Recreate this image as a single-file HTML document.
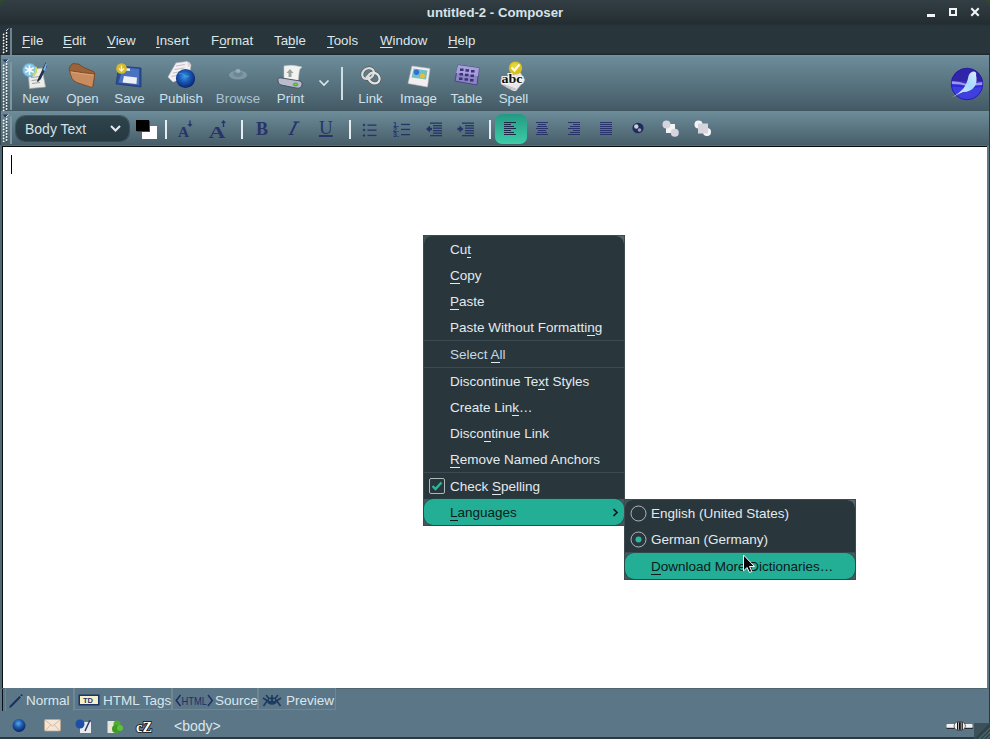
<!DOCTYPE html>
<html><head><meta charset="utf-8">
<style>
*{margin:0;padding:0;box-sizing:border-box}
html,body{width:990px;height:739px;overflow:hidden;background:#27343b}
body{position:relative;font-family:"Liberation Sans",sans-serif;font-size:13px;color:#dfe6ea}
.a{position:absolute}
#title{left:0;top:0;width:990px;height:24px;background:linear-gradient(#333e44,#2a353a 60%,#222c31)}
#title .t{left:0;width:990px;top:5px;text-align:center;font-weight:bold;font-size:13.2px;color:#d9e2e6;letter-spacing:0}
#menubar{left:0;top:24px;width:990px;height:31px;background:linear-gradient(#232d32,#28353b 2px,#28353b 29px,#1f2a30 30px)}
.mi{top:9px;font-size:13.3px;color:#dde5e9;white-space:pre}
.mi u{text-decoration:underline;text-underline-offset:2px;text-decoration-thickness:1px}
#tb1{left:0;top:55px;width:990px;height:56px;background:linear-gradient(#7893a0,#6c8b99 2px,#445b66 55px,#3d535d)}
#tb2{left:0;top:111px;width:990px;height:34px;background:linear-gradient(#6f8d9a,#6b8a97 2px,#475e69)}
#line{left:0;top:145px;width:990px;height:1px;background:#566a72}
#edit{left:2px;top:146px;width:985px;height:542px;background:#fff;border-left:1px solid #0b0e10;border-top:1px solid #0b0e10}
#tabs{left:0;top:688px;width:990px;height:23px;background:#5a7687;border-top:1px solid #4f6570}
#status{left:0;top:711px;width:990px;height:28px;background:#5a7687;border-bottom:2px solid #2c3a40}
.tab{top:-1px;height:22px;border:1px solid #6f8793;border-top:none;background:#5a7687}
.tt{top:4px;font-size:13.5px;color:#dbe7ec;white-space:pre}
#menu{left:423px;top:235px;width:202px;height:291px;background:linear-gradient(#29363c,#29363c) padding-box,#3d4b51;border:1px solid #3d4b51;box-shadow:inset 0 0 0 0 #000}
#menu::before,#sub::before{content:'';position:absolute;left:0;top:0;width:7px;height:7px;background:radial-gradient(circle at 100% 100%,#29363c 6px,#3c5550 7px)}
#menu::after,#sub::after{content:'';position:absolute;right:0;top:0;width:7px;height:7px;background:radial-gradient(circle at 0 100%,#29363c 6px,#56666c 7px)}
.it{left:26px;font-size:13.5px;color:#e3eaee;white-space:pre}
.it u{text-decoration:none;border-bottom:1px solid #e3eaee;}
.ms{left:0;width:200px;height:1px;background:#3c4b53}
#sub{left:624px;top:499px;width:232px;height:81px;background:#29363c;border:1px solid #3d4b51}
.lbl{font-size:13.3px;color:#cfe0ea;white-space:pre;text-align:center}
.grip{width:6px;background-image:radial-gradient(circle,#fff 0.8px,transparent 1.1px);background-size:3px 3px}
.sep{width:2px;background:#c8d6dc}
</style></head><body>
<div id="title" class="a"><div class="a t">untitled-2 - Composer</div>
  <div class="a" style="left:927px;top:14px;width:8px;height:2.5px;background:#f2f4f5"></div>
  <div class="a" style="left:948.5px;top:7.8px;width:8.6px;height:8.6px;border:2px solid #f2f4f5"></div>
  <svg class="a" style="left:970px;top:7px" width="10" height="10" viewBox="0 0 10 10"><path d="M1.3 1.3 L8.7 8.7 M8.7 1.3 L1.3 8.7" stroke="#f2f4f5" stroke-width="2.1"/></svg>
  <div class="a" style="left:984px;top:0;width:6px;height:6px;background:radial-gradient(circle at 0 100%,transparent 5.5px,#2e4a28 6px)"></div>
  <div class="a" style="left:0;top:0;width:6px;height:6px;background:radial-gradient(circle at 100% 100%,transparent 5.5px,#2e4a28 6px)"></div>
</div>
<div id="menubar" class="a">
  <svg class="a" style="left:0px;top:4px" width="10" height="26" viewBox="0 0 10 26"><path d="M2.5 0.5 L8.5 0.5 L5.5 3.5 Z" fill="#26365e"/><path d="M6 3 L8.5 0.5" stroke="#fff" stroke-width="0.8"/><circle cx="3.6" cy="6.5" r="0.9" fill="#fff"/><circle cx="6.6" cy="5" r="0.9" fill="#fff"/><rect x="3.5" y="7.3" width="1.3" height="0.9" fill="#000" opacity="0.6"/><rect x="6.5" y="5.8" width="1.3" height="0.9" fill="#000" opacity="0.6"/><circle cx="3.6" cy="9.5" r="0.9" fill="#fff"/><circle cx="6.6" cy="8" r="0.9" fill="#fff"/><rect x="3.5" y="10.3" width="1.3" height="0.9" fill="#000" opacity="0.6"/><rect x="6.5" y="8.8" width="1.3" height="0.9" fill="#000" opacity="0.6"/><circle cx="3.6" cy="12.5" r="0.9" fill="#fff"/><circle cx="6.6" cy="11" r="0.9" fill="#fff"/><rect x="3.5" y="13.3" width="1.3" height="0.9" fill="#000" opacity="0.6"/><rect x="6.5" y="11.8" width="1.3" height="0.9" fill="#000" opacity="0.6"/><circle cx="3.6" cy="15.5" r="0.9" fill="#fff"/><circle cx="6.6" cy="14" r="0.9" fill="#fff"/><rect x="3.5" y="16.3" width="1.3" height="0.9" fill="#000" opacity="0.6"/><rect x="6.5" y="14.8" width="1.3" height="0.9" fill="#000" opacity="0.6"/><circle cx="3.6" cy="18.5" r="0.9" fill="#fff"/><circle cx="6.6" cy="17" r="0.9" fill="#fff"/><rect x="3.5" y="19.3" width="1.3" height="0.9" fill="#000" opacity="0.6"/><rect x="6.5" y="17.8" width="1.3" height="0.9" fill="#000" opacity="0.6"/><circle cx="3.6" cy="21.5" r="0.9" fill="#fff"/><circle cx="6.6" cy="20" r="0.9" fill="#fff"/><rect x="3.5" y="22.3" width="1.3" height="0.9" fill="#000" opacity="0.6"/><rect x="6.5" y="20.8" width="1.3" height="0.9" fill="#000" opacity="0.6"/><circle cx="3.6" cy="24.5" r="0.9" fill="#fff"/><circle cx="6.6" cy="23" r="0.9" fill="#fff"/><rect x="3.5" y="25.3" width="1.3" height="0.9" fill="#000" opacity="0.6"/><rect x="6.5" y="23.8" width="1.3" height="0.9" fill="#000" opacity="0.6"/></svg><div class="a" style="left:10px;top:4px;width:1.5px;height:27px;background:#6f838c"></div>
  <div class="a mi" style="left:22px"><u>F</u>ile</div>
  <div class="a mi" style="left:63px"><u>E</u>dit</div>
  <div class="a mi" style="left:107px"><u>V</u>iew</div>
  <div class="a mi" style="left:156px"><u>I</u>nsert</div>
  <div class="a mi" style="left:211px">F<u>o</u>rmat</div>
  <div class="a mi" style="left:274px">Ta<u>b</u>le</div>
  <div class="a mi" style="left:327px"><u>T</u>ools</div>
  <div class="a mi" style="left:380px"><u>W</u>indow</div>
  <div class="a mi" style="left:448px"><u>H</u>elp</div>
</div>
<div id="tb1" class="a">
  <svg class="a" style="left:0px;top:4px" width="10" height="52" viewBox="0 0 10 52"><path d="M2.5 0.5 L8.5 0.5 L5.5 3.5 Z" fill="#26365e"/><path d="M6 3 L8.5 0.5" stroke="#fff" stroke-width="0.8"/><circle cx="3.6" cy="6.5" r="0.9" fill="#fff"/><circle cx="6.6" cy="5" r="0.9" fill="#fff"/><rect x="3.5" y="7.3" width="1.3" height="0.9" fill="#1e2a30" opacity="0.6"/><rect x="6.5" y="5.8" width="1.3" height="0.9" fill="#1e2a30" opacity="0.6"/><circle cx="3.6" cy="9.5" r="0.9" fill="#fff"/><circle cx="6.6" cy="8" r="0.9" fill="#fff"/><rect x="3.5" y="10.3" width="1.3" height="0.9" fill="#1e2a30" opacity="0.6"/><rect x="6.5" y="8.8" width="1.3" height="0.9" fill="#1e2a30" opacity="0.6"/><circle cx="3.6" cy="12.5" r="0.9" fill="#fff"/><circle cx="6.6" cy="11" r="0.9" fill="#fff"/><rect x="3.5" y="13.3" width="1.3" height="0.9" fill="#1e2a30" opacity="0.6"/><rect x="6.5" y="11.8" width="1.3" height="0.9" fill="#1e2a30" opacity="0.6"/><circle cx="3.6" cy="15.5" r="0.9" fill="#fff"/><circle cx="6.6" cy="14" r="0.9" fill="#fff"/><rect x="3.5" y="16.3" width="1.3" height="0.9" fill="#1e2a30" opacity="0.6"/><rect x="6.5" y="14.8" width="1.3" height="0.9" fill="#1e2a30" opacity="0.6"/><circle cx="3.6" cy="18.5" r="0.9" fill="#fff"/><circle cx="6.6" cy="17" r="0.9" fill="#fff"/><rect x="3.5" y="19.3" width="1.3" height="0.9" fill="#1e2a30" opacity="0.6"/><rect x="6.5" y="17.8" width="1.3" height="0.9" fill="#1e2a30" opacity="0.6"/><circle cx="3.6" cy="21.5" r="0.9" fill="#fff"/><circle cx="6.6" cy="20" r="0.9" fill="#fff"/><rect x="3.5" y="22.3" width="1.3" height="0.9" fill="#1e2a30" opacity="0.6"/><rect x="6.5" y="20.8" width="1.3" height="0.9" fill="#1e2a30" opacity="0.6"/><circle cx="3.6" cy="24.5" r="0.9" fill="#fff"/><circle cx="6.6" cy="23" r="0.9" fill="#fff"/><rect x="3.5" y="25.3" width="1.3" height="0.9" fill="#1e2a30" opacity="0.6"/><rect x="6.5" y="23.8" width="1.3" height="0.9" fill="#1e2a30" opacity="0.6"/><circle cx="3.6" cy="27.5" r="0.9" fill="#fff"/><circle cx="6.6" cy="26" r="0.9" fill="#fff"/><rect x="3.5" y="28.3" width="1.3" height="0.9" fill="#1e2a30" opacity="0.6"/><rect x="6.5" y="26.8" width="1.3" height="0.9" fill="#1e2a30" opacity="0.6"/><circle cx="3.6" cy="30.5" r="0.9" fill="#fff"/><circle cx="6.6" cy="29" r="0.9" fill="#fff"/><rect x="3.5" y="31.3" width="1.3" height="0.9" fill="#1e2a30" opacity="0.6"/><rect x="6.5" y="29.8" width="1.3" height="0.9" fill="#1e2a30" opacity="0.6"/><circle cx="3.6" cy="33.5" r="0.9" fill="#fff"/><circle cx="6.6" cy="32" r="0.9" fill="#fff"/><rect x="3.5" y="34.3" width="1.3" height="0.9" fill="#1e2a30" opacity="0.6"/><rect x="6.5" y="32.8" width="1.3" height="0.9" fill="#1e2a30" opacity="0.6"/><circle cx="3.6" cy="36.5" r="0.9" fill="#fff"/><circle cx="6.6" cy="35" r="0.9" fill="#fff"/><rect x="3.5" y="37.3" width="1.3" height="0.9" fill="#1e2a30" opacity="0.6"/><rect x="6.5" y="35.8" width="1.3" height="0.9" fill="#1e2a30" opacity="0.6"/><circle cx="3.6" cy="39.5" r="0.9" fill="#fff"/><circle cx="6.6" cy="38" r="0.9" fill="#fff"/><rect x="3.5" y="40.3" width="1.3" height="0.9" fill="#1e2a30" opacity="0.6"/><rect x="6.5" y="38.8" width="1.3" height="0.9" fill="#1e2a30" opacity="0.6"/><circle cx="3.6" cy="42.5" r="0.9" fill="#fff"/><circle cx="6.6" cy="41" r="0.9" fill="#fff"/><rect x="3.5" y="43.3" width="1.3" height="0.9" fill="#1e2a30" opacity="0.6"/><rect x="6.5" y="41.8" width="1.3" height="0.9" fill="#1e2a30" opacity="0.6"/><circle cx="3.6" cy="45.5" r="0.9" fill="#fff"/><circle cx="6.6" cy="44" r="0.9" fill="#fff"/><rect x="3.5" y="46.3" width="1.3" height="0.9" fill="#1e2a30" opacity="0.6"/><rect x="6.5" y="44.8" width="1.3" height="0.9" fill="#1e2a30" opacity="0.6"/><circle cx="3.6" cy="48.5" r="0.9" fill="#fff"/><circle cx="6.6" cy="47" r="0.9" fill="#fff"/><rect x="3.5" y="49.3" width="1.3" height="0.9" fill="#1e2a30" opacity="0.6"/><rect x="6.5" y="47.8" width="1.3" height="0.9" fill="#1e2a30" opacity="0.6"/><circle cx="3.6" cy="51.5" r="0.9" fill="#fff"/><circle cx="6.6" cy="50" r="0.9" fill="#fff"/><rect x="3.5" y="52.3" width="1.3" height="0.9" fill="#1e2a30" opacity="0.6"/><rect x="6.5" y="50.8" width="1.3" height="0.9" fill="#1e2a30" opacity="0.6"/></svg>
  <div class="a" style="left:10px;top:7px;width:1.5px;height:48px;background:#7d97a2"></div><div class="a" style="left:0;top:0;width:1px;height:56px;background:#34464e"></div>
  <!-- New -->
  <svg class="a" style="left:21px;top:7px" width="26" height="27" viewBox="0 0 26 27">
    <path d="M7 8 L21 6 L24.5 25 L8.5 26.5 Z" fill="#ecede8" stroke="#a9ada8" stroke-width="0.7"/>
    <path d="M10 15.5l9-1M10.5 18.5l9-1M11 21.5l8-1" stroke="#a0a5a0" stroke-width="1"/>
    <path d="M24.8 1.5 L18.5 15 L16.5 19.5 L19.5 16.5 L25.8 3 Z" fill="#263046" stroke="#263046" stroke-width="1.2"/>
    <path d="M25 1 L22 8 L24 9 L26 2 Z" fill="#79b8f0"/>
    <circle cx="8.5" cy="8" r="6.8" fill="#88c4e4" stroke="#5fa2cc" stroke-width="0.8"/>
    <path d="M14.5 5 A6.8 6.8 0 0 1 12 13.5" stroke="#c9dc5a" stroke-width="2.2" fill="none"/>
    <path d="M8.5 3.2v9.6M4.3 5.6l8.4 4.8M4.3 10.4l8.4-4.8" stroke="#fff" stroke-width="1.6"/>
  </svg>
  <!-- Open -->
  <svg class="a" style="left:68px;top:7px" width="28" height="27" viewBox="0 0 28 27">
    <path d="M1 7.5 Q1.5 3 5 1.5 L11 2.2 L15.3 5.3 L25.5 9.5 Q27 10.5 26.5 12 L25 24 L9 20.5 Z" fill="#9c6238" stroke="#6e4122" stroke-width="0.8"/>
    <path d="M1.5 8.7 Q8 9.5 14.5 10.6 L26.3 11.9 Q27 12.5 26.5 14 L24.8 24.5 Q24 25.5 22.5 25 L9.4 20.8 Q6 19.5 4 16.5 Q2.5 13 1.5 8.7 Z" fill="#c88c5e" stroke="#7a4a28" stroke-width="0.9"/>
    <path d="M3 10 Q9 11 15 12 L25 13" stroke="#dba27a" stroke-width="1" fill="none"/>
  </svg>
  <!-- Save -->
  <svg class="a" style="left:115px;top:8px" width="28" height="25" viewBox="0 0 28 25">
    <path d="M4 3 L26 5 L26 24 L1 21 Z" fill="#2c4f96" stroke="#1f3b78" stroke-width="0.8"/>
    <path d="M8 4.5 L24 6 L24 22 L3.5 19.5 Z" fill="#4a73bf"/>
    <path d="M9 13 L22 14.5 L21.5 21 L7.5 19.5 Z" fill="#eef0f5"/>
    <path d="M9 5 L15 5.5 L15 8 L9 7.5 Z" fill="#e6ebf4"/>
    <circle cx="6.5" cy="5.5" r="5.3" fill="#d8b92c"/>
    <path d="M6.5 2.5v5M4 5.5l2.5 2.5 2.5-2.5" stroke="#fff6c6" stroke-width="1.4" fill="none"/>
  </svg>
  <!-- Publish -->
  <svg class="a" style="left:167px;top:5px" width="28" height="30" viewBox="0 0 28 30">
    <defs><radialGradient id="pg" cx="0.45" cy="0.4" r="0.6"><stop offset="0" stop-color="#3d9ae6"/><stop offset="0.45" stop-color="#1b5cb8"/><stop offset="1" stop-color="#0a2470"/></radialGradient></defs>
    <path d="M9 3 L20 1.5 Q23 2 24 5 L22 16 L6 22 L1 17 Z" fill="#f2f0f2" stroke="#c4c2c6" stroke-width="0.6"/>
    <path d="M9 6l9-1.5M7.5 9.5l10-1.5M6 13l9-1.5M4.5 16.5l8-1.5" stroke="#b7aeb8" stroke-width="0.8"/>
    <path d="M20 2 Q23 3 23.5 6 L21 7 Z" fill="#e8d0d8"/>
    <circle cx="18.5" cy="18.5" r="9.6" fill="url(#pg)"/>
    <path d="M12 14 Q15 12 17 15 Q19 18 22 16" stroke="#4fb0f0" stroke-width="1" fill="none" opacity="0.6"/>
  </svg>
  <!-- Browse (disabled) -->
  <svg class="a" style="left:227px;top:12px" width="22" height="14" viewBox="0 0 22 14">
    <ellipse cx="11" cy="8" rx="9" ry="4.5" fill="#8aa3ae" opacity="0.75"/>
    <ellipse cx="11" cy="7" rx="5" ry="3" fill="#6d8794"/>
    <ellipse cx="11" cy="4" rx="2.5" ry="2" fill="#98afb9"/>
  </svg>
  <!-- Print -->
  <svg class="a" style="left:276px;top:9px" width="29" height="25" viewBox="0 0 29 25">
    <path d="M8 2 Q16 0 26 3 Q23 5 23 9 L22 18 L8 16 Z" fill="#f2f2ee" stroke="#c6c8c4" stroke-width="0.6"/>
    <path d="M14 5 L17.5 9 L15.5 9 L15.5 13 L12.5 13 L12.5 9 L10.5 9 Z" fill="#9ca29f"/>
    <path d="M2 17 Q1 13 6 14 L24 17 Q27 18 26 21 Q25 25 20 24 L5 21 Q2 20 2 17 Z" fill="#b8bccb" stroke="#3f4658" stroke-width="0.9"/>
    <ellipse cx="19.5" cy="20.5" rx="2.3" ry="1.5" fill="#6ed040" stroke="#2e6a1a" stroke-width="0.5"/>
  </svg>
  <svg class="a" style="left:318px;top:24px" width="12" height="8" viewBox="0 0 12 8"><path d="M1.5 1.5 L6 6 L10.5 1.5" stroke="#d9e6ec" stroke-width="1.7" fill="none"/></svg>
  <div class="a" style="left:341px;top:12px;width:1.5px;height:33px;background:#d0dde2"></div>
  <!-- Link -->
  <svg class="a" style="left:359px;top:10px" width="24" height="22" viewBox="0 0 24 22">
    <ellipse cx="9" cy="8.5" rx="6.2" ry="5" transform="rotate(-35 9 8.5)" fill="none" stroke="#555b5c" stroke-width="3.6"/>
    <ellipse cx="15" cy="13" rx="6" ry="5" transform="rotate(40 15 13)" fill="none" stroke="#555b5c" stroke-width="3.6"/>
    <ellipse cx="9" cy="8.5" rx="6.2" ry="5" transform="rotate(-35 9 8.5)" fill="none" stroke="#dadcda" stroke-width="2.3"/>
    <ellipse cx="15" cy="13" rx="6" ry="5" transform="rotate(40 15 13)" fill="none" stroke="#e2e4e2" stroke-width="2.3"/>
    <path d="M7 13 Q10 9 13 8" stroke="#dadcda" stroke-width="2.3" fill="none"/>
  </svg>
  <!-- Image -->
  <svg class="a" style="left:407px;top:10px" width="24" height="23" viewBox="0 0 24 23">
    <path d="M5 1 L23 3.5 L20.5 22 L1 18.5 Z" fill="#f3eef2" stroke="#b9b6ba" stroke-width="0.6"/>
    <path d="M6.5 3.5 L20.5 5.5 L19 14.5 L4.5 12.5 Z" fill="#72c0c4"/>
    <circle cx="9.5" cy="7.3" r="2.7" fill="#2f6fd8"/>
    <circle cx="15.5" cy="11" r="2.5" fill="#e6c034"/>
  </svg>
  <!-- Table -->
  <svg class="a" style="left:454px;top:9px" width="26" height="22" viewBox="0 0 26 22">
    <path d="M4 1 L25 4 L23 21 L1 17 Z" fill="#8c83c6" stroke="#3f3a7a" stroke-width="0.8"/>
    <path d="M4 1 L25 4 L24 12 L2 9 Z" fill="#a79fdc"/>
    <g fill="#3a3370">
      <rect x="6" y="4.5" width="3.5" height="2.5"/><rect x="11.5" y="5.2" width="3.5" height="2.5"/><rect x="17" y="6" width="3.5" height="2.5"/>
      <rect x="5.5" y="9" width="3.5" height="2.5"/><rect x="11" y="9.7" width="3.5" height="2.5"/><rect x="16.5" y="10.5" width="3.5" height="2.5"/>
      <rect x="5" y="13.5" width="3.5" height="2.5"/><rect x="10.5" y="14.2" width="3.5" height="2.5"/><rect x="16" y="15" width="3.5" height="2.5"/>
    </g>
  </svg>
  <!-- Spell -->
  <svg class="a" style="left:498px;top:4px" width="30" height="32" viewBox="0 0 30 32">
    <path d="M5 19 L22 13 L27 21 L17 33 L3 25 Z" fill="#e9e7ea" stroke="#a7aaa8" stroke-width="0.6"/>
    <path d="M6 26 L18 30 M8 28 L17 31" stroke="#b5b3b8" stroke-width="0.8"/>
    <circle cx="17.5" cy="9" r="6.6" fill="#d9c21a"/>
    <circle cx="16.5" cy="7.5" r="3.5" fill="#f0e050" opacity="0.6"/>
    <path d="M13.5 8.5 L16.5 11.5 L21.5 5.5" stroke="#fffbe6" stroke-width="2.2" fill="none"/>
    <text x="3.5" y="24" font-family="Liberation Serif" font-weight="bold" font-size="12.5" fill="#111" stroke="#f4f4f4" stroke-width="2.2" paint-order="stroke" textLength="21" lengthAdjust="spacingAndGlyphs">abc</text>
  </svg>
  <div class="a lbl" style="left:15px;top:36px;width:41px">New</div>
  <div class="a lbl" style="left:62px;top:36px;width:41px">Open</div>
  <div class="a lbl" style="left:109px;top:36px;width:41px">Save</div>
  <div class="a lbl" style="left:155px;top:36px;width:52px">Publish</div>
  <div class="a lbl" style="left:212px;top:36px;width:52px;color:#a9c4d2">Browse</div>
  <div class="a lbl" style="left:270px;top:36px;width:41px">Print</div>
  <div class="a lbl" style="left:350px;top:36px;width:41px">Link</div>
  <div class="a lbl" style="left:393px;top:36px;width:51px">Image</div>
  <div class="a lbl" style="left:441px;top:36px;width:51px">Table</div>
  <div class="a lbl" style="left:493px;top:36px;width:41px">Spell</div>
  <!-- seamonkey -->
  <svg class="a" style="left:950px;top:12px" width="34" height="34" viewBox="0 0 34 34">
    <defs><clipPath id="cc"><circle cx="17" cy="17" r="15.8"/></clipPath>
    <linearGradient id="bird" x1="0" y1="1" x2="1" y2="0"><stop offset="0" stop-color="#e8f4ff"/><stop offset="0.6" stop-color="#a8d8ff"/><stop offset="1" stop-color="#d8ecff"/></linearGradient></defs>
    <g clip-path="url(#cc)">
      <rect x="0" y="0" width="34" height="34" fill="#3a2fb8"/>
      <rect x="0" y="0" width="34" height="14" fill="#3024a8"/>
      <rect x="0" y="19" width="34" height="15" fill="#3f3fe0"/>
      <path d="M0 14 Q10 14.5 17 17 Q26 16 34 15 L34 19 Q24 20 17 20.5 Q8 18 0 18 Z" fill="#9c97ee"/>
      <path d="M0 17 Q10 17 17 19 L34 18 L34 19.5 Q24 21 17 21 Q8 19.5 0 19.5 Z" fill="#2a2ad8"/>
    </g>
    <circle cx="17" cy="17" r="15.8" fill="none" stroke="#2218a0" stroke-width="0.8"/>
    <path d="M2 30.5 Q9 26.5 13 22 Q17 17 18.5 9 Q20 4.5 24 4.5 Q27 5 26 8 Q27.5 14 25 19 Q21 25 13 25 Q8 27 2 30.5 Z" fill="url(#bird)"/>
  </svg>
</div>
<div id="tb2" class="a">
  <svg class="a" style="left:0px;top:3px" width="10" height="28" viewBox="0 0 10 28"><path d="M2.5 0.5 L8.5 0.5 L5.5 3.5 Z" fill="#26365e"/><path d="M6 3 L8.5 0.5" stroke="#fff" stroke-width="0.8"/><circle cx="3.6" cy="6.5" r="0.9" fill="#fff"/><circle cx="6.6" cy="5" r="0.9" fill="#fff"/><rect x="3.5" y="7.3" width="1.3" height="0.9" fill="#1e2a30" opacity="0.6"/><rect x="6.5" y="5.8" width="1.3" height="0.9" fill="#1e2a30" opacity="0.6"/><circle cx="3.6" cy="9.5" r="0.9" fill="#fff"/><circle cx="6.6" cy="8" r="0.9" fill="#fff"/><rect x="3.5" y="10.3" width="1.3" height="0.9" fill="#1e2a30" opacity="0.6"/><rect x="6.5" y="8.8" width="1.3" height="0.9" fill="#1e2a30" opacity="0.6"/><circle cx="3.6" cy="12.5" r="0.9" fill="#fff"/><circle cx="6.6" cy="11" r="0.9" fill="#fff"/><rect x="3.5" y="13.3" width="1.3" height="0.9" fill="#1e2a30" opacity="0.6"/><rect x="6.5" y="11.8" width="1.3" height="0.9" fill="#1e2a30" opacity="0.6"/><circle cx="3.6" cy="15.5" r="0.9" fill="#fff"/><circle cx="6.6" cy="14" r="0.9" fill="#fff"/><rect x="3.5" y="16.3" width="1.3" height="0.9" fill="#1e2a30" opacity="0.6"/><rect x="6.5" y="14.8" width="1.3" height="0.9" fill="#1e2a30" opacity="0.6"/><circle cx="3.6" cy="18.5" r="0.9" fill="#fff"/><circle cx="6.6" cy="17" r="0.9" fill="#fff"/><rect x="3.5" y="19.3" width="1.3" height="0.9" fill="#1e2a30" opacity="0.6"/><rect x="6.5" y="17.8" width="1.3" height="0.9" fill="#1e2a30" opacity="0.6"/><circle cx="3.6" cy="21.5" r="0.9" fill="#fff"/><circle cx="6.6" cy="20" r="0.9" fill="#fff"/><rect x="3.5" y="22.3" width="1.3" height="0.9" fill="#1e2a30" opacity="0.6"/><rect x="6.5" y="20.8" width="1.3" height="0.9" fill="#1e2a30" opacity="0.6"/><circle cx="3.6" cy="24.5" r="0.9" fill="#fff"/><circle cx="6.6" cy="23" r="0.9" fill="#fff"/><rect x="3.5" y="25.3" width="1.3" height="0.9" fill="#1e2a30" opacity="0.6"/><rect x="6.5" y="23.8" width="1.3" height="0.9" fill="#1e2a30" opacity="0.6"/><circle cx="3.6" cy="27.5" r="0.9" fill="#fff"/><circle cx="6.6" cy="26" r="0.9" fill="#fff"/><rect x="3.5" y="28.3" width="1.3" height="0.9" fill="#1e2a30" opacity="0.6"/><rect x="6.5" y="26.8" width="1.3" height="0.9" fill="#1e2a30" opacity="0.6"/></svg>
  <div class="a" style="left:10px;top:5px;width:1.5px;height:28px;background:#7d97a2"></div><div class="a" style="left:0;top:0;width:1px;height:34px;background:#34464e"></div>
  <div class="a" style="left:16px;top:5px;width:113px;height:25px;border-radius:9px;background:linear-gradient(#2f444e,#263840);box-shadow:0 0 0 1px rgba(30,45,52,0.5)"></div>
  <div class="a" style="left:25px;top:10px;font-size:14px;color:#d6e0e5;white-space:pre">Body Text</div>
  <svg class="a" style="left:109px;top:13px" width="13" height="9" viewBox="0 0 13 9"><path d="M2 2 L6.5 6.5 L11 2" stroke="#e4ecef" stroke-width="2" fill="none"/></svg>
  <div class="a" style="left:142px;top:15px;width:15px;height:13px;background:#fff"></div>
  <div class="a" style="left:136px;top:9px;width:13px;height:11px;background:#000;box-shadow:1px 1px 0 #3a4a52"></div>
  <div class="a" style="left:165px;top:9px;width:1.5px;height:19px;background:#e6eef1"></div>
  <svg class="a" style="left:176px;top:8px" width="20" height="20" viewBox="0 0 20 20">
    <text x="2" y="18" font-family="Liberation Serif" font-weight="bold" font-size="14" fill="#27336a" textLength="11" lengthAdjust="spacingAndGlyphs">A</text>
    <path d="M14 1.5v5" stroke="#27336a" stroke-width="1.4"/><path d="M11.5 5 L14 8 L16.5 5 Z" fill="#27336a"/>
  </svg>
  <svg class="a" style="left:207px;top:8px" width="22" height="20" viewBox="0 0 22 20">
    <text x="1.5" y="19" font-family="Liberation Serif" font-weight="bold" font-size="17" fill="#27336a" textLength="17" lengthAdjust="spacingAndGlyphs">A</text>
    <path d="M16.5 8V3" stroke="#27336a" stroke-width="1.4"/><path d="M14 4 L16.5 1 L19 4 Z" fill="#27336a"/>
  </svg>
  <div class="a" style="left:241px;top:9px;width:1.5px;height:19px;background:#e6eef1"></div>
  <svg class="a" style="left:256px;top:10px" width="13" height="15" viewBox="0 0 13 15"><text x="0" y="14" font-family="Liberation Serif" font-weight="bold" font-size="18.5" fill="#27336a" textLength="12" lengthAdjust="spacingAndGlyphs">B</text></svg>
  <svg class="a" style="left:288px;top:10px" width="12" height="15" viewBox="0 0 12 15"><path d="M8.5 1 L2.5 13.5" stroke="#27336a" stroke-width="1.8"/><path d="M5.5 1.2 H11.5 M0.5 13.5 H5.5" stroke="#27336a" stroke-width="1.2"/></svg>
  <div class="a" style="left:319px;top:6px;font-family:'Liberation Serif';font-size:19px;color:#27336a;text-decoration:underline;text-decoration-thickness:1.5px;text-underline-offset:1px">U</div>
  <div class="a" style="left:349px;top:9px;width:1.5px;height:19px;background:#e6eef1"></div>
  <svg class="a" style="left:362px;top:11.5px" width="17" height="16" viewBox="0 0 17 16">
    <g fill="#27336a"><path d="M2 0.5 L3.5 2 L2 3.5 L0.5 2 Z"/><path d="M2 5.5 L3.5 7 L2 8.5 L0.5 7 Z"/><path d="M2 11 L3.5 12.5 L2 14 L0.5 12.5 Z"/>
    <rect x="5.5" y="1.5" width="9" height="1.3"/><rect x="5.5" y="6.5" width="9" height="1.3"/><rect x="5.5" y="11.8" width="9" height="1.3"/></g>
  </svg>
  <svg class="a" style="left:392px;top:10px" width="19" height="17" viewBox="0 0 19 17">
    <g fill="#27336a"><text x="1" y="5.5" font-size="7" font-family="Liberation Sans" font-weight="bold" textLength="6" lengthAdjust="spacingAndGlyphs">1.</text><text x="1" y="10.5" font-size="7" font-family="Liberation Sans" font-weight="bold" textLength="6" lengthAdjust="spacingAndGlyphs">2.</text><text x="1" y="15.7" font-size="7" font-family="Liberation Sans" font-weight="bold" textLength="6" lengthAdjust="spacingAndGlyphs">3.</text>
    <rect x="9" y="2.8" width="9" height="1.3"/><rect x="9" y="7.8" width="9" height="1.3"/><rect x="9" y="13" width="9" height="1.3"/></g>
  </svg>
  <svg class="a" style="left:425px;top:11px" width="19" height="15" viewBox="0 0 19 15">
    <g fill="#27336a"><rect x="5" y="0.5" width="12" height="1.3"/><rect x="8" y="3" width="9" height="1.3"/><rect x="8" y="5.5" width="9" height="1.3"/><rect x="8" y="8" width="9" height="1.3"/><rect x="8" y="10.5" width="9" height="1.3"/><rect x="5" y="13" width="12" height="1.3"/>
    <path d="M1 7 L5 3.5 L5 5.8 L7 5.8 L7 8.2 L5 8.2 L5 10.5 Z"/></g>
  </svg>
  <svg class="a" style="left:457px;top:11px" width="19" height="15" viewBox="0 0 19 15">
    <g fill="#27336a"><rect x="5" y="0.5" width="12" height="1.3"/><rect x="8" y="3" width="9" height="1.3"/><rect x="8" y="5.5" width="9" height="1.3"/><rect x="8" y="8" width="9" height="1.3"/><rect x="8" y="10.5" width="9" height="1.3"/><rect x="5" y="13" width="12" height="1.3"/>
    <path d="M6.5 7 L2.5 3.5 L2.5 5.8 L0.5 5.8 L0.5 8.2 L2.5 8.2 L2.5 10.5 Z"/></g>
  </svg>
  <div class="a" style="left:489px;top:9px;width:1.5px;height:19px;background:#e6eef1"></div>
  <div class="a" style="left:495px;top:3px;width:32px;height:30px;border-radius:7px;background:linear-gradient(#249a84,#3dcca8)"></div>
  <svg class="a" style="left:504px;top:11px" width="13" height="13" viewBox="0 0 13 13"><g fill="#1c2a4a"><rect x="0" y="0" width="12" height="1"/><rect x="0" y="2" width="7" height="1"/><rect x="0" y="4" width="10" height="1"/><rect x="0" y="6" width="12" height="1"/><rect x="0" y="8" width="7" height="1"/><rect x="0" y="10" width="10" height="1"/><rect x="0" y="12" width="12" height="1"/></g></svg>
  <svg class="a" style="left:536px;top:11px" width="13" height="13" viewBox="0 0 13 13"><g fill="#27336a"><rect x="0" y="0" width="12" height="1"/><rect x="2" y="2" width="8" height="1"/><rect x="1" y="4" width="10" height="1"/><rect x="0" y="6" width="12" height="1"/><rect x="2" y="8" width="8" height="1"/><rect x="1" y="10" width="10" height="1"/><rect x="0" y="12" width="12" height="1"/></g></svg>
  <svg class="a" style="left:568px;top:11px" width="13" height="13" viewBox="0 0 13 13"><g fill="#27336a"><rect x="0" y="0" width="12" height="1"/><rect x="5" y="2" width="7" height="1"/><rect x="2" y="4" width="10" height="1"/><rect x="0" y="6" width="12" height="1"/><rect x="5" y="8" width="7" height="1"/><rect x="2" y="10" width="10" height="1"/><rect x="0" y="12" width="12" height="1"/></g></svg>
  <svg class="a" style="left:600px;top:11px" width="13" height="13" viewBox="0 0 13 13"><g fill="#27336a"><rect x="0" y="0" width="12" height="1"/><rect x="0" y="2" width="12" height="1"/><rect x="0" y="4" width="12" height="1"/><rect x="0" y="6" width="12" height="1"/><rect x="0" y="8" width="12" height="1"/><rect x="0" y="10" width="12" height="1"/><rect x="0" y="12" width="12" height="1"/></g></svg>
  <svg class="a" style="left:632px;top:11px" width="13" height="12" viewBox="0 0 13 12">
    <ellipse cx="6" cy="6" rx="5.6" ry="5.3" fill="#1f2a5e"/><circle cx="4.3" cy="4.5" r="2.2" fill="#c9ced8"/><circle cx="7.5" cy="8" r="1.8" fill="#9aa0a8"/>
  </svg>
  <svg class="a" style="left:662px;top:9px" width="18" height="18" viewBox="0 0 18 18">
    <rect x="4" y="4" width="9" height="9" fill="#f4f4f6"/><circle cx="4.5" cy="4.5" r="4" fill="#d6d4dc"/><circle cx="12.8" cy="12.8" r="4" fill="#d6d4dc"/>
  </svg>
  <svg class="a" style="left:694px;top:9px" width="18" height="17" viewBox="0 0 18 17">
    <circle cx="4.5" cy="4.5" r="4" fill="#f4f4f6"/><circle cx="13" cy="12" r="4" fill="#f4f4f6"/><rect x="4" y="3.5" width="10" height="10" fill="#d6d4dc"/>
  </svg>
</div>
<div id="line" class="a"></div>
<div class="a" style="left:989px;top:55px;width:1px;height:684px;background:#2b3a40;z-index:5"></div>
<div id="edit" class="a"><div class="a" style="left:8px;top:8px;width:1px;height:19px;background:#000"></div></div>
<div class="a" style="left:0;top:146px;width:2px;height:542px;background:#4e6874"></div>
<div class="a" style="left:987px;top:146px;width:3px;height:542px;background:#5f7986"></div>
<div id="tabs" class="a">
  <div class="a" style="left:2px;top:0;width:1px;height:25px;background:#0b0e10"></div>
  <div class="a tab" style="left:5px;width:69px;height:24.5px;background:#5a7687"></div>
  <svg class="a" style="left:8px;top:4px" width="15" height="16" viewBox="0 0 15 16"><path d="M13.5 1 L2 12.5 L1 15 L3.5 14 L14.8 2.5 Z" fill="#1b2f63"/><path d="M12 2.5 L14 4.5" stroke="#9ab4d8" stroke-width="1"/></svg>
  <div class="a tt" style="left:26px">Normal</div>
  <div class="a tab" style="left:74px;width:98px"></div>
  <svg class="a" style="left:78px;top:5px" width="22" height="12" viewBox="0 0 22 12"><rect x="0.5" y="0.5" width="21" height="11" fill="#1d3566"/><rect x="2" y="2" width="18" height="8" fill="#f4f0c8"/><text x="5" y="9" font-family="Liberation Sans" font-weight="bold" font-size="7.5" fill="#1d3566">TD</text></svg>
  <div class="a tt" style="left:103px">HTML Tags</div>
  <div class="a tab" style="left:172px;width:86px"></div>
  <svg class="a" style="left:175px;top:5px" width="39" height="13" viewBox="0 0 39 13"><path d="M5.5 1 L1.2 6.5 L5.5 12M33 1 L37.3 6.5 L33 12" stroke="#1d2f66" stroke-width="1.5" fill="none"/><text x="6.5" y="10.8" font-family="Liberation Sans" font-size="11" fill="#1d2f66" textLength="25.5" lengthAdjust="spacingAndGlyphs">HTML</text></svg>
  <div class="a tt" style="left:215px">Source</div>
  <div class="a tab" style="left:258px;width:78px"></div>
  <svg class="a" style="left:262px;top:5px" width="20" height="13" viewBox="0 0 20 13"><g fill="none" stroke="#1e3a5e" stroke-width="1.6"><path d="M1.5 12 L5 7 L15 7 L18.5 12 M1 4 L5 6.5 M19 4 L15 6.5 M4 1 L7 4.5 M16 1 L13 4.5 M10 1 V4"/></g><ellipse cx="10" cy="7" rx="5" ry="3.8" fill="#1e3a5e"/><circle cx="8" cy="6" r="0.9" fill="#6a8a9a"/><circle cx="12" cy="6" r="0.9" fill="#6a8a9a"/></svg>
  <div class="a tt" style="left:286px">Preview</div>
</div>
<div id="status" class="a">
  <svg class="a" style="left:12px;top:7px" width="15" height="15" viewBox="0 0 15 15"><defs><radialGradient id="gl" cx="0.45" cy="0.35" r="0.6"><stop offset="0" stop-color="#5aa8e8"/><stop offset="0.5" stop-color="#1e5cb0"/><stop offset="1" stop-color="#0c2a6a"/></radialGradient></defs><circle cx="7" cy="7.5" r="6.5" fill="url(#gl)"/></svg>
  <svg class="a" style="left:44px;top:8px" width="17" height="13" viewBox="0 0 17 13"><rect x="0.5" y="0.5" width="16" height="11.5" rx="1" fill="#f3e6d6" stroke="#bfa58c" stroke-width="0.8"/><path d="M1 1 L8.5 7 L16 1 M1 12 L6.5 6 M16 12 L10.5 6" stroke="#c9ae94" stroke-width="0.8" fill="none"/></svg>
  <svg class="a" style="left:75px;top:8px" width="17" height="15" viewBox="0 0 17 15"><rect x="5" y="3" width="11" height="11" fill="#e8eaee"/><circle cx="5" cy="5" r="4.5" fill="#1e4fa8"/><path d="M15 1 L10 12" stroke="#2a3c66" stroke-width="1.5"/></svg>
  <svg class="a" style="left:107px;top:8px" width="16" height="15" viewBox="0 0 16 15"><rect x="0.5" y="2" width="10" height="12" fill="#e8e6dc"/><circle cx="10" cy="5" r="3.5" fill="#4fae2c"/><circle cx="9" cy="10" r="4" fill="#3f9a22"/><circle cx="13" cy="9" r="3" fill="#5cc23a"/></svg>
  <svg class="a" style="left:135px;top:9px" width="18" height="14" viewBox="0 0 18 14"><text x="1" y="12" font-family="Liberation Serif" font-weight="bold" font-size="14" fill="#fff" stroke="#111" stroke-width="1.6" paint-order="stroke" textLength="16" lengthAdjust="spacingAndGlyphs">cZ</text></svg>
  <div class="a" style="left:174px;top:7px;font-size:14px;color:#dbe7ec;white-space:pre">&lt;body&gt;</div>
  <svg class="a" style="left:946px;top:10px" width="28" height="10" viewBox="0 0 28 10"><rect x="0.5" y="3" width="26" height="4" rx="1" fill="#f2f2f2"/><path d="M0.5 7.3 H27" stroke="#111" stroke-width="0.9"/><path d="M8 5 Q8.5 1 11 1 H16 Q19 1 19.5 5 Q19 9 16 9 H11 Q8.5 9 8 5 Z" fill="#f2f2f2" stroke="#111" stroke-width="0.6"/><rect x="11" y="1.2" width="1.3" height="7.6" fill="#111"/><rect x="13" y="1.2" width="1.8" height="7.6" fill="#111"/><rect x="15.5" y="1.2" width="1.3" height="7.6" fill="#111"/></svg>
  <svg class="a" style="left:974px;top:12px;z-index:6" width="16" height="16" viewBox="0 0 16 16"><rect x="0" y="0" width="16" height="16" fill="#3b5058"/><path d="M0 16 L16 0 V16 Z" fill="#2f4248"/><path d="M5 16 L16 5 M9 16 L16 9 M13 16 L16 13" stroke="#4d646d" stroke-width="1.3"/></svg>
</div>
<div id="menu" class="a">
  <div class="a it" style="top:6px">Cu<u>t</u></div>
  <div class="a it" style="top:32px"><u>C</u>opy</div>
  <div class="a it" style="top:58px"><u>P</u>aste</div>
  <div class="a it" style="top:84px">Paste Without Formatti<u>n</u>g</div>
  <div class="a ms" style="top:104px"></div>
  <div class="a it" style="top:111px;color:#c5d9e6">Select <u>A</u>ll</div>
  <div class="a ms" style="top:131px"></div>
  <div class="a it" style="top:138px">Discontinue Te<u>x</u>t Styles</div>
  <div class="a it" style="top:164px">Create Lin<u>k</u>…</div>
  <div class="a it" style="top:190px">Disco<u>n</u>tinue Link</div>
  <div class="a it" style="top:216px"><u>R</u>emove Named Anchors</div>
  <div class="a ms" style="top:236px"></div>
  <svg class="a" style="left:5px;top:242px" width="16" height="16" viewBox="0 0 16 16"><rect x="0.5" y="0.5" width="15" height="15" rx="1.5" fill="none" stroke="#aeb8bd" stroke-width="1"/><path d="M3.5 8 L6.5 11 L12.5 4.5" stroke="#2fb79c" stroke-width="2.4" fill="none"/></svg>
  <div class="a it" style="top:243px">Check <u>S</u>pelling</div>
  <div class="a" style="left:0;top:263px;width:200px;height:26px;background:#4a585d"></div><div class="a" style="left:0;top:263px;width:200px;height:26px;background:#23ae96;border-radius:9px;box-shadow:0 0 0 0.6px #1f4a44"></div>
  <div class="a it" style="top:269px;color:#0c1a1a"><u style="border-color:#0c1a1a">L</u>anguages</div>
  <svg class="a" style="left:188px;top:272px" width="7" height="9" viewBox="0 0 7 9"><path d="M1.5 1 L5 4.5 L1.5 8" stroke="#0c1a1a" stroke-width="1.7" fill="none"/></svg>
</div>
<div id="sub" class="a">
  <svg class="a" style="left:5px;top:5px" width="17" height="17" viewBox="0 0 17 17"><circle cx="8.5" cy="8.5" r="7.5" fill="none" stroke="#aeb8bd" stroke-width="1"/></svg>
  <div class="a it" style="top:6px">English (United States)</div>
  <svg class="a" style="left:5px;top:31px" width="17" height="17" viewBox="0 0 17 17"><circle cx="8.5" cy="8.5" r="7.5" fill="none" stroke="#aeb8bd" stroke-width="1"/><circle cx="8.5" cy="8.5" r="3" fill="#2fb79c"/></svg>
  <div class="a it" style="top:32px">German (Germany)</div>
  <div class="a ms" style="top:52px;width:230px"></div>
  <div class="a" style="left:0;top:53px;width:230px;height:26px;background:#4a585d"></div><div class="a" style="left:0;top:53px;width:230px;height:26px;background:#23ae96;border-radius:9px;box-shadow:0 0 0 0.6px #1f4a44"></div>
  <div class="a it" style="top:59px;color:#0c1a1a"><u style="border-color:#0c1a1a">D</u>ownload More Dictionaries…</div>
</div>
<svg class="a" style="left:742px;top:554px" width="16" height="22" viewBox="0 0 16 22"><path d="M1.5 1 L1.5 17 L5 13.5 L7.5 18.5 L9.8 17.5 L7.5 12.5 L12.5 12.5 Z" fill="#0a0608" stroke="#f4ffff" stroke-width="1"/></svg>
</body></html>
